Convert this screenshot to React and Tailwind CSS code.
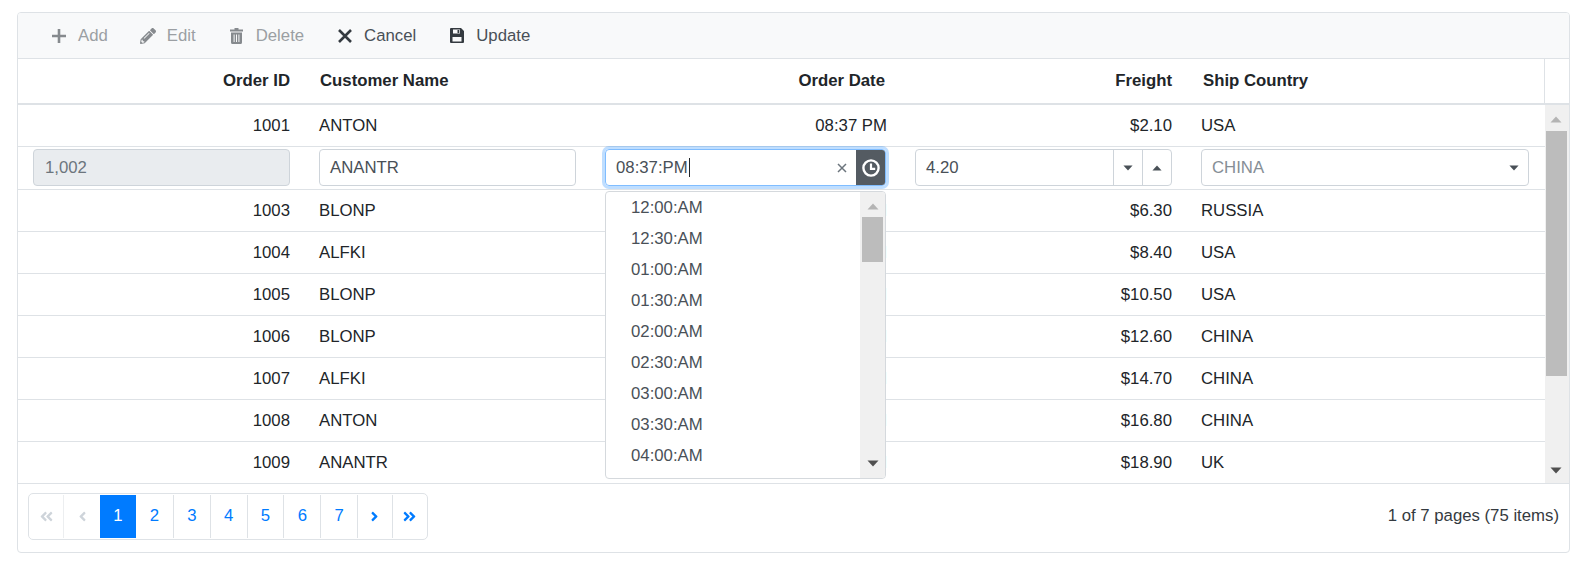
import { FaPencilAlt, FaAngleLeft, FaAngleRight, FaAngleDoubleLeft, FaAngleDoubleRight } from "react-icons/fa";

const cols = "grid grid-cols-[286px_286px_311px_285px_1fr]";

const rows = [
  ["1003", "BLONP", "$6.30", "RUSSIA"],
  ["1004", "ALFKI", "$8.40", "USA"],
  ["1005", "BLONP", "$10.50", "USA"],
  ["1006", "BLONP", "$12.60", "CHINA"],
  ["1007", "ALFKI", "$14.70", "CHINA"],
  ["1008", "ANTON", "$16.80", "CHINA"],
  ["1009", "ANANTR", "$18.90", "UK"],
];

const times = ["12:00:AM", "12:30:AM", "01:00:AM", "01:30:AM", "02:00:AM", "02:30:AM", "03:00:AM", "03:30:AM", "04:00:AM"];

function Caret({ up = false, className = "" }) {
  return (
    <svg width="12" height="7" viewBox="0 0 12 7" className={className}>
      <path d={up ? "M6 0.5 L11.5 6.5 H0.5 Z" : "M0.5 0.5 H11.5 L6 6.5 Z"} fill="currentColor" />
    </svg>
  );
}

function ToolItem({ icon, label, muted, className = "" }) {
  return (
    <div className={`flex items-center gap-[11px] ${muted ? "text-[#9b9fa3]" : "text-[#495057]"} ${className}`}>
      <span className={`flex w-[16px] justify-center ${muted ? "text-[#868a8e]" : "text-[#343a40]"}`}>{icon}</span>
      <span>{label}</span>
    </div>
  );
}

function Row({ id, name, freight, country, border = true }) {
  return (
    <div className={`${cols} h-[42px] items-center ${border ? "border-b border-[#dee2e6]" : ""}`}>
      <div className="pr-[14px] text-right">{id}</div>
      <div className="pl-[15px]">{name}</div>
      <div className="pr-[14px] text-right">08:37 PM</div>
      <div className="pr-[14px] text-right">{freight}</div>
      <div className="pl-[15px]">{country}</div>
    </div>
  );
}

function EditRow() {
  const box = "h-[37px] rounded-[4px] border border-[#ced4da] flex items-center";
  return (
    <div className={`${cols} h-[43px] items-center border-b border-[#dee2e6] pb-[1px] text-[#495057]`}>
      <div className="pl-[15px] pr-[14px]">
        <div className={`${box} bg-[#e9ecef] pl-[11px] text-[#6c757d]`}>1,002</div>
      </div>
      <div className="pl-[15px] pr-[14px]">
        <div className={`${box} pl-[10px]`}>ANANTR</div>
      </div>
      <div className="pl-[15px] pr-[15px]">
        <div className="flex h-[37px] items-stretch overflow-hidden rounded-[4px] border border-[#80bdff] shadow-[0_0_0_3px_rgba(0,123,255,0.25)]">
          <div className="flex flex-1 items-center pl-[10px]">
            08:37:PM<span className="ml-[1px] h-[19px] w-[1px] bg-[#212529]" />
          </div>
          <div className="flex w-[28px] items-center justify-center text-[#6c757d]">
            <svg width="10" height="10" viewBox="0 0 10 10">
              <path d="M1 1 L9 9 M9 1 L1 9" stroke="currentColor" strokeWidth="1.5" />
            </svg>
          </div>
          <div className="flex w-[29px] items-center justify-center bg-[#545b62]">
            <svg width="18" height="18" viewBox="0 0 18 18" fill="none" stroke="#fff">
              <circle cx="9" cy="9" r="7.6" strokeWidth="2.4" />
              <path d="M9 4.5 V9.8 H13.2" strokeWidth="2.2" />
            </svg>
          </div>
        </div>
      </div>
      <div className="pl-[14px] pr-[14px]">
        <div className={`${box} pl-[10px]`}>
          <span className="flex-1">4.20</span>
          <span className="flex h-full w-[29px] items-center justify-center border-l border-[#ced4da]">
            <Caret className="h-[6px] w-[10px]" />
          </span>
          <span className="flex h-full w-[29px] items-center justify-center border-l border-[#ced4da]">
            <Caret up className="h-[6px] w-[10px]" />
          </span>
        </div>
      </div>
      <div className="pl-[15px] pr-[16px]">
        <div className={`${box} pl-[10px] pr-[9px]`}>
          <span className="flex-1 text-[#868e96]">CHINA</span>
          <Caret className="h-[6px] w-[10px]" />
        </div>
      </div>
    </div>
  );
}

function TimePopup() {
  return (
    <div className="absolute left-[587px] top-[86px] flex h-[288px] w-[281px] overflow-hidden rounded-[4px] border border-[#d5d9dd] bg-white text-[#495057]">
      <div className="flex-1 pl-[25px]">
        {times.map((t) => (
          <div key={t} className="flex h-[31px] items-center">{t}</div>
        ))}
      </div>
      <div className="flex w-[25px] flex-col items-center bg-[#f0f0f0]">
        <Caret up className="mt-[11px] h-[7px] w-[12px] text-[#b4b4b4]" />
        <div className="mt-[7px] h-[45px] w-[21px] bg-[#bcbcbc]" />
        <Caret className="mt-auto mb-[11px] h-[7px] w-[12px] text-[#505050]" />
      </div>
    </div>
  );
}

function Pager() {
  const cell = "flex w-[36.8px] items-center justify-center border-l border-[#dee2e6]";
  return (
    <div className="flex h-[47px] w-[400px] rounded-[5px] border border-[#dee2e6] py-[1px] text-[#007bff]">
      <div className="flex w-[34px] items-center justify-center text-[#ced4da]"><FaAngleDoubleLeft size={15} /></div>
      <div className="flex w-[37px] items-center justify-center border-l border-[#eceef0] text-[#ced4da]"><FaAngleLeft size={15} /></div>
      <div className="flex w-[36px] items-center justify-center bg-[#007bff] text-white">1</div>
      <div className="flex w-[37px] items-center justify-center">2</div>
      {["3", "4", "5", "6", "7"].map((n) => (
        <div key={n} className={cell}>{n}</div>
      ))}
      <div className="flex w-[35px] items-center justify-center border-l border-[#dee2e6]"><FaAngleRight size={15} /></div>
      <div className="flex flex-1 items-center justify-center border-l border-[#dee2e6]"><FaAngleDoubleRight size={15} /></div>
    </div>
  );
}

export default function App() {
  return (
    <div className="h-[574px] w-[1586px] overflow-hidden bg-white pl-[17px] pt-[12px] font-['Liberation_Sans',Arial,sans-serif] text-[16.75px] text-[#212529]">
      <div className="flex h-[541px] w-[1553px] flex-col overflow-hidden rounded-[4px] border border-[#dee2e6]">
        {/* Toolbar */}
        <div className="flex h-[46px] shrink-0 items-center border-b border-[#dee2e6] bg-[#f8f9fa] pl-[33px]">
          <ToolItem
            muted
            label="Add"
            icon={<svg width="14" height="14" viewBox="0 0 14 14"><path d="M7 0 V14 M0 7 H14" stroke="currentColor" strokeWidth="2.6" /></svg>}
          />
          <ToolItem muted label="Edit" className="ml-[32px]" icon={<FaPencilAlt size={18} />} />
          <ToolItem
            muted
            label="Delete"
            className="ml-[33px]"
            icon={
              <svg width="13" height="16" viewBox="0 0 13 16" fill="currentColor">
                <path d="M4.5 0 H8.5 V1.5 H13 V3.5 H0 V1.5 H4.5 Z" />
                <path fillRule="evenodd" d="M1 4.5 H12 V14.5 Q12 16 10.5 16 H2.5 Q1 16 1 14.5 Z M3.6 6.5 V14 H4.6 V6.5 Z M6 6.5 V14 H7 V6.5 Z M8.4 6.5 V14 H9.4 V6.5 Z" />
              </svg>
            }
          />
          <ToolItem
            label="Cancel"
            className="ml-[33px]"
            icon={<svg width="14" height="14" viewBox="0 0 14 14"><path d="M1 1 L13 13 M13 1 L1 13" stroke="currentColor" strokeWidth="2.6" /></svg>}
          />
          <ToolItem
            label="Update"
            className="ml-[33px]"
            icon={
              <svg width="14" height="15" viewBox="0 0 14 15" fill="currentColor">
                <path fillRule="evenodd" d="M1 0 H11 L14 3 V14 Q14 15 13 15 H1 Q0 15 0 14 V1 Q0 0 1 0 Z M3 1.5 V5.5 H10 V1.5 Z M2.5 9 V13.5 H11.5 V9 Z M7.5 2 H9.3 V5 H7.5 Z" />
              </svg>
            }
          />
        </div>

        {/* Header */}
        <div className="flex h-[46px] shrink-0 border-b-2 border-[#dee2e6] font-bold">
          <div className={`${cols} w-[1527px] items-center border-r border-[#dee2e6]`}>
            <div className="pr-[14px] text-right">Order ID</div>
            <div className="pl-[16px]">Customer Name</div>
            <div className="pr-[16px] text-right">Order Date</div>
            <div className="pr-[14px] text-right">Freight</div>
            <div className="pl-[17px]">Ship Country</div>
          </div>
        </div>

        {/* Body */}
        <div className="relative flex h-[378px] shrink-0">
          <div className="w-[1527px] overflow-hidden">
            <Row id="1001" name="ANTON" freight="$2.10" country="USA" />
            <EditRow />
            {rows.map((r, i) => (
              <Row key={r[0]} id={r[0]} name={r[1]} freight={r[2]} country={r[3]} border={i < rows.length - 1} />
            ))}
          </div>
          <div className="flex flex-1 flex-col items-center bg-[#f0f0f0] pr-[2px]">
            <Caret up className="mt-[11px] h-[7px] w-[12px] text-[#b4b4b4]" />
            <div className="mt-[8px] h-[245px] w-[21px] bg-[#bcbcbc]" />
            <Caret className="mt-auto mb-[9px] h-[7px] w-[12px] text-[#505050]" />
          </div>
          <TimePopup />
        </div>

        {/* Footer */}
        <div className="flex flex-1 items-center justify-between border-t border-[#dee2e6] pb-[4px] pl-[10px] pr-[10px] text-[#343a40]">
          <Pager />
          <span>1 of 7 pages (75 items)</span>
        </div>
      </div>
    </div>
  );
}
